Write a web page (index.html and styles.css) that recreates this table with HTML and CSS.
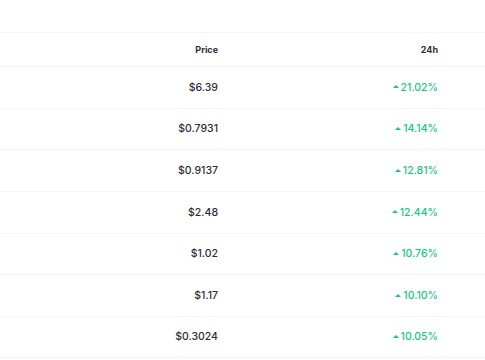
FILE: index.html
```html
<!DOCTYPE html>
<html>
<head>
<meta charset="utf-8">
<link rel="stylesheet" href="styles.css">
</head>
<body>
<div class="table">
  <div class="row head">
    <div class="cell price">Price</div>
    <div class="cell change">24h</div>
  </div>
  <div class="row"><div class="cell price">$6.39</div><div class="cell change"><span class="up"></span>21.02%</div></div>
  <div class="row"><div class="cell price">$0.7931</div><div class="cell change"><span class="up"></span>14.14%</div></div>
  <div class="row"><div class="cell price">$0.9137</div><div class="cell change"><span class="up"></span>12.81%</div></div>
  <div class="row"><div class="cell price">$2.48</div><div class="cell change"><span class="up"></span>12.44%</div></div>
  <div class="row"><div class="cell price">$1.02</div><div class="cell change"><span class="up"></span>10.76%</div></div>
  <div class="row"><div class="cell price">$1.17</div><div class="cell change"><span class="up"></span>10.10%</div></div>
  <div class="row"><div class="cell price">$0.3024</div><div class="cell change"><span class="up"></span>10.05%</div></div>
</div>
</body>
</html>
```
FILE: styles.css
```css
html, body {
  margin: 0;
  padding: 0;
  background: #fff;
}
body {
  font-family: Inter, "Liberation Sans", sans-serif;
  color: #2a2d38;
}
.table {
  padding-top: 32px;
}
.row {
  display: grid;
  grid-template-columns: 218px 220px 1fr;
  align-items: center;
  height: 41.67px;
  box-sizing: border-box;
  border-top: 1px solid #f3f5f7;
  font-size: 10.5px;
  font-weight: 500;
}
.row:last-child {
  border-bottom: 1px solid #f3f5f7;
}
.row.head {
  height: 34px;
  font-size: 9px;
  font-weight: 700;
}
.cell {
  text-align: right;
}
.price {
  grid-column: 1;
}
.change {
  grid-column: 2;
  color: #16c784;
  display: flex;
  justify-content: flex-end;
  align-items: center;
}
.head .change {
  color: #2a2d38;
}
.up {
  display: inline-block;
  width: 0;
  height: 0;
  border-left: 3.5px solid transparent;
  border-right: 3.5px solid transparent;
  border-bottom: 3.5px solid #16c784;
  margin-right: 2px;
  margin-top: -1px;
}
```
